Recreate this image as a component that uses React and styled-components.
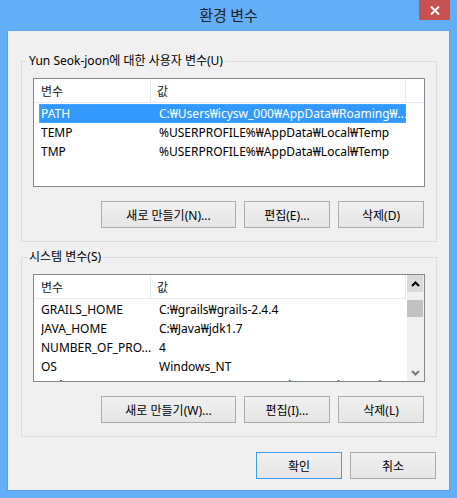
import React from 'react';
import styled, { createGlobalStyle } from 'styled-components';

const GlobalStyle = createGlobalStyle`
  html, body { margin: 0; padding: 0; background: #ffffff; }
  body { font-family: "Noto Sans", "Noto Sans CJK KR", sans-serif; font-size: 12px; color: #000; }
  * { box-sizing: border-box; }
`;

const Frame = styled.div`
  width: 457px;
  height: 498px;
  background: #62aef7;
  display: flex;
  flex-direction: column;
`;

const TitleBar = styled.div`
  height: 30px;
  flex-shrink: 0;
  display: grid;
  grid-template-columns: 1fr auto 1fr;
  align-items: start;
`;

const Title = styled.div`
  grid-column: 2;
  font-family: "Noto Sans CJK KR", "Noto Sans", sans-serif;
  font-size: 15px;
  line-height: 30px;
  color: #222;
`;

const CloseButton = styled.div`
  grid-column: 3;
  justify-self: end;
  margin-right: 7px;
  width: 31px;
  height: 20px;
  background: #c75050;
  display: flex;
  align-items: center;
  justify-content: center;
`;

const Client = styled.div`
  flex: 1;
  margin: 0 7px 7px;
  border: 1px solid #58a2ea;
  background: #f0f0f0;
  display: flex;
  flex-direction: column;
  padding: 22px 12px 0 13px;
`;

const Group = styled.fieldset`
  margin: 0;
  min-width: 0;
  border: 1px solid #dcdcdc;
  padding: 9px 11px 13px 11px;
  display: flex;
  flex-direction: column;
  & + & { margin-top: 7px; }
`;

const Legend = styled.legend`
  padding: 0 2px;
  margin-left: -6px;
  line-height: 16px;
  font-size: 12px;
  color: #000;
`;

const ListBox = styled.div`
  height: ${p => p.$h}px;
  border: 1px solid #828790;
  background: #fff;
  display: flex;
  overflow: hidden;
  flex-shrink: 0;
`;

const ListMain = styled.div`
  flex: 1;
  min-width: 0;
  display: flex;
  flex-direction: column;
`;

const Header = styled.div`
  height: 24px;
  flex-shrink: 0;
  display: flex;
  border-bottom: 1px solid #e3ebf5;
`;

const HeaderCell = styled.div`
  width: ${p => p.$w}px;
  flex-shrink: 0;
  padding-left: ${p => p.$pl}px;
  line-height: 23px;
  border-right: 1px solid #e3ebf5;
  color: #1a1a1a;
  white-space: nowrap;
  font-family: "Noto Sans CJK KR", "Noto Sans", sans-serif;
`;

const Body = styled.div`
  flex: 1;
  padding-top: 1px;
  overflow: hidden;
`;

const Row = styled.div`
  display: grid;
  grid-template-columns: 118px 1fr;
  margin-left: 5px;
  width: 367px;
  height: 19px;
  padding-left: 2px;
  align-items: center;
  background: ${p => (p.$selected ? '#3399ff' : 'transparent')};
  color: ${p => (p.$selected ? '#fff' : '#000')};
  outline: ${p => (p.$selected ? '1px dotted #e8903c' : 'none')};
  outline-offset: -1px;
`;

const Cell = styled.div`
  white-space: nowrap;
  overflow: hidden;
  line-height: 18px;
`;

const ScrollBar = styled.div`
  width: 17px;
  flex-shrink: 0;
  background: #f0f0f0;
  display: flex;
  flex-direction: column;
  padding-right: 1px;
`;

const ScrollButton = styled.div`
  height: 17px;
  display: flex;
  align-items: center;
  justify-content: center;
  background: ${p => (p.$active ? '#dadada' : 'transparent')};
`;

const Track = styled.div`
  flex: 1;
  padding-top: 8px;
`;

const Thumb = styled.div`
  height: 17px;
  background: #c2c2c2;
`;

const ButtonRow = styled.div`
  display: flex;
  justify-content: flex-end;
  gap: 8px;
  margin-top: ${p => p.$mt}px;
  margin-right: 1px;
`;

const Button = styled.button`
  width: ${p => p.$w}px;
  height: 27px;
  padding: 0;
  border: 1px solid ${p => (p.$default ? '#3d9cec' : '#acacac')};
  background: linear-gradient(#f0f0f0, #e5e5e5);
  font-family: "Noto Sans", "Noto Sans CJK KR", sans-serif;
  font-size: 12px;
  color: #000;
  border-radius: 0;
`;

const Chevron = ({ up, color }) => (
  <svg width="9" height="6" viewBox="0 0 9 6">
    <polyline
      points={up ? '1,5 4.5,1.5 8,5' : '1,1 4.5,4.5 8,1'}
      fill="none"
      stroke={color}
      strokeWidth="2"
    />
  </svg>
);

const userVars = [
  ['PATH', 'C:₩Users₩icysw_000₩AppData₩Roaming₩...'],
  ['TEMP', '%USERPROFILE%₩AppData₩Local₩Temp'],
  ['TMP', '%USERPROFILE%₩AppData₩Local₩Temp'],
];

const sysVars = [
  ['GRAILS_HOME', 'C:₩grails₩grails-2.4.4'],
  ['JAVA_HOME', 'C:₩Java₩jdk1.7'],
  ['NUMBER_OF_PRO...', '4'],
  ['OS', 'Windows_NT'],
  ['Path', 'C:₩ProgramData₩Oracle₩Java₩javapath;C:₩Windows'],
];

const VarList = ({ rows, height, scroll, selectedIndex }) => (
  <ListBox $h={height}>
    <ListMain>
      <Header>
        <HeaderCell $w={117} $pl={7}>변수</HeaderCell>
        <HeaderCell $w={255} $pl={6}>값</HeaderCell>
      </Header>
      <Body>
        {rows.map(([name, value], i) => (
          <Row key={name} $selected={i === selectedIndex}>
            <Cell>{name}</Cell>
            <Cell>{value}</Cell>
          </Row>
        ))}
      </Body>
    </ListMain>
    {scroll && (
      <ScrollBar>
        <ScrollButton $active>
          <Chevron up color="#000" />
        </ScrollButton>
        <Track>
          <Thumb />
        </Track>
        <ScrollButton>
          <Chevron color="#7a7a7a" />
        </ScrollButton>
      </ScrollBar>
    )}
  </ListBox>
);

export default function App() {
  return (
    <>
      <GlobalStyle />
      <Frame>
        <TitleBar>
          <Title>환경 변수</Title>
          <CloseButton>
            <svg width="10" height="9" viewBox="0 0 10 9">
              <path d="M1 0.5 L9 8.5 M9 0.5 L1 8.5" stroke="#fff" strokeWidth="2" />
            </svg>
          </CloseButton>
        </TitleBar>
        <Client>
          <Group>
            <Legend>Yun Seok-joon에 대한 사용자 변수(U)</Legend>
            <VarList rows={userVars} height={109} selectedIndex={0} />
            <ButtonRow $mt={14}>
              <Button $w={135}>새로 만들기(N)...</Button>
              <Button $w={86}>편집(E)...</Button>
              <Button $w={86}>삭제(D)</Button>
            </ButtonRow>
          </Group>
          <Group>
            <Legend>시스템 변수(S)</Legend>
            <VarList rows={sysVars} height={108} scroll selectedIndex={-1} />
            <ButtonRow $mt={14}>
              <Button $w={135}>새로 만들기(W)...</Button>
              <Button $w={86}>편집(I)...</Button>
              <Button $w={86}>삭제(L)</Button>
            </ButtonRow>
          </Group>
          <ButtonRow $mt={15}>
            <Button $w={86} $default>확인</Button>
            <Button $w={86}>취소</Button>
          </ButtonRow>
        </Client>
      </Frame>
    </>
  );
}
